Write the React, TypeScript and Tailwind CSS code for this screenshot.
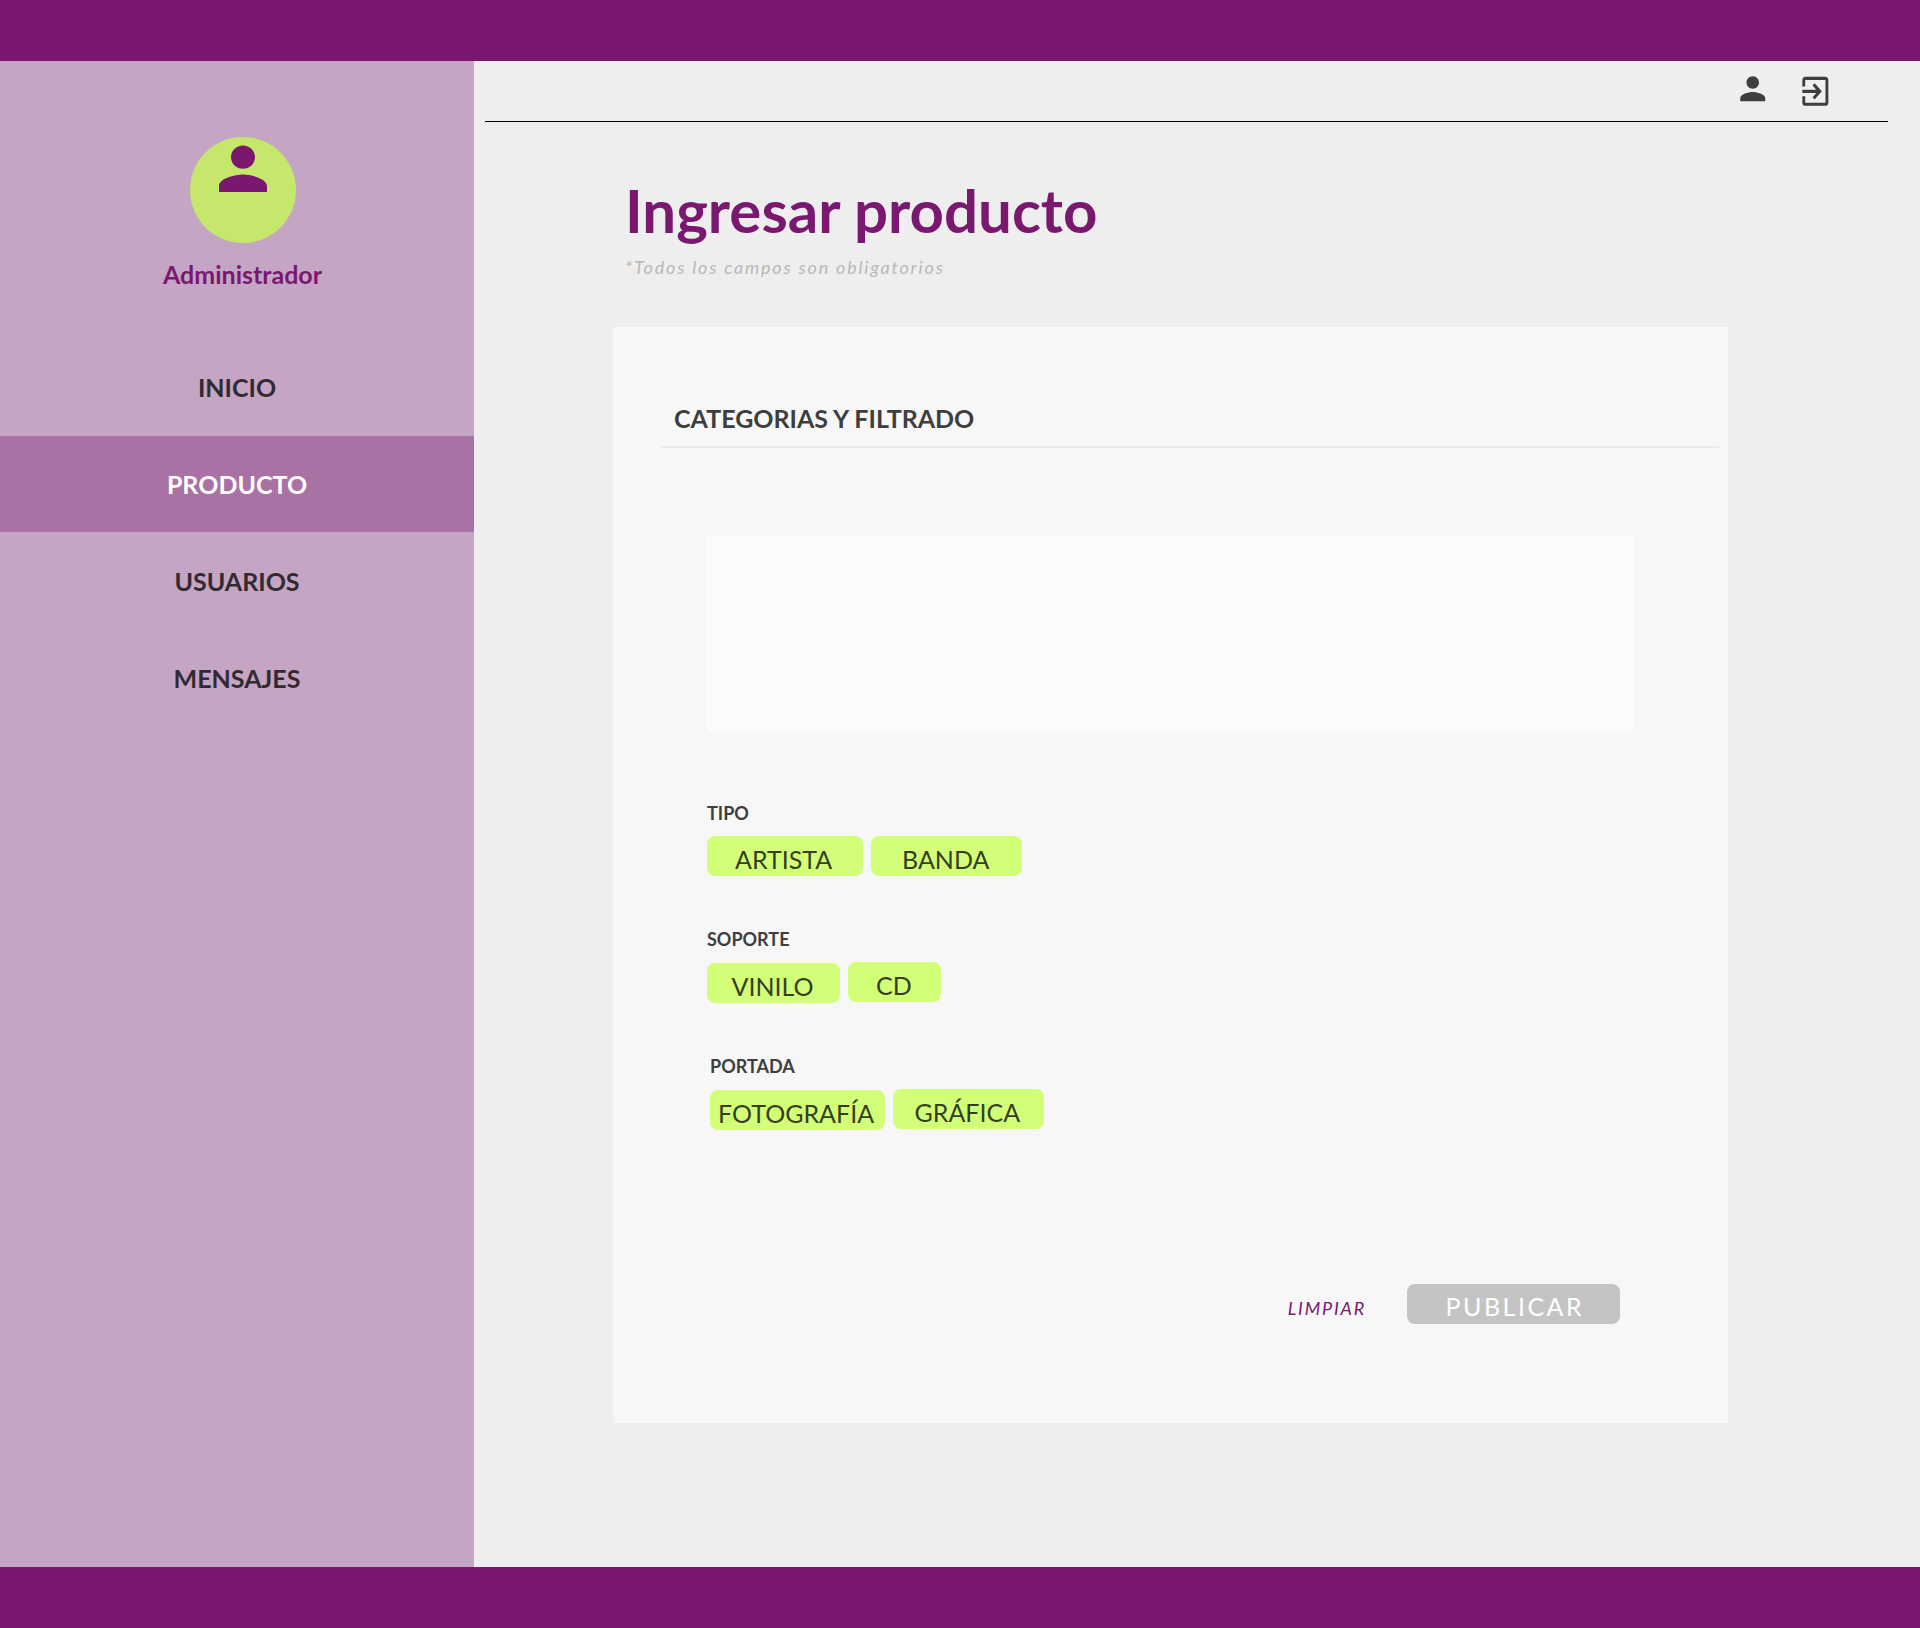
type TagItem = { label: string; box: string };
type Group = { title: string; className: string; tags: TagItem[] };

const navItems = [
  { label: 'INICIO', active: false },
  { label: 'PRODUCTO', active: true },
  { label: 'USUARIOS', active: false },
  { label: 'MENSAJES', active: false },
];

const groups: Group[] = [
  {
    title: 'TIPO',
    className: 'mt-[70px]',
    tags: [
      { label: 'ARTISTA', box: 'w-[156px] pl-[28px]' },
      { label: 'BANDA', box: 'w-[151px] pl-[31px]' },
    ],
  },
  {
    title: 'SOPORTE',
    className: 'mt-[52px]',
    tags: [
      { label: 'VINILO', box: 'w-[133px] pl-[24.5px] mt-px' },
      { label: 'CD', box: 'w-[93px] pl-[28px]' },
    ],
  },
  {
    title: 'PORTADA',
    className: 'mt-[52px] ml-[3px]',
    tags: [
      { label: 'FOTOGRAFÍA', box: 'w-[175px] pl-[8px] mt-px' },
      { label: 'GRÁFICA', box: 'w-[151px] pl-[21.5px]' },
    ],
  },
];

function PersonIcon({ className }: { className: string }) {
  return (
    <svg viewBox="0 0 24 24" preserveAspectRatio="none" fill="currentColor" className={className}>
      <path d="M12 12c2.21 0 4-1.79 4-4s-1.79-4-4-4-4 1.79-4 4 1.79 4 4 4zm0 2c-2.67 0-8 1.34-8 4v2h16v-2c0-2.66-5.33-4-8-4z" />
    </svg>
  );
}

function ExitIcon({ className }: { className: string }) {
  return (
    <svg viewBox="0 0 24 24" preserveAspectRatio="none" fill="currentColor" className={className}>
      <path d="M10.09 15.59L11.5 17l5-5-5-5-1.41 1.41L12.67 11H3v2h9.67l-2.58 2.59zM19 3H5c-1.11 0-2 .9-2 2v4h2V5h14v14H5v-4H3v4c0 1.1.89 2 2 2h14c1.1 0 2-.9 2-2V5c0-1.1-.9-2-2-2z" />
    </svg>
  );
}

function Sidebar() {
  return (
    <aside className="w-[474px] shrink-0 bg-[#c5a5c4] pt-[76px]">
      <div className="ml-[12px] flex flex-col items-center">
        <div className="flex size-[106px] justify-center rounded-full bg-[#c5e86c]">
          <PersonIcon className="-mt-[3px] h-[69.5px] w-[72px] text-[#7a1870]" />
        </div>
        <div className="mt-[16px] mr-px text-[25px] leading-[30px] font-bold text-[#7a1870]">Administrador</div>
      </div>
      <nav className="mt-[50px] flex flex-col gap-px">
        {navItems.map((item) => (
          <a
            key={item.label}
            className={
              item.active
                ? 'flex h-[96px] items-center justify-center bg-[#aa71a5] text-[25px] leading-[30px] font-bold text-white'
                : 'flex h-[96px] items-center justify-center text-[25px] leading-[30px] font-bold text-[#312b31]'
            }
          >
            {item.label}
          </a>
        ))}
      </nav>
    </aside>
  );
}

function TagGroup({ group }: { group: Group }) {
  return (
    <section className={group.className}>
      <h3 className="text-[18px] leading-[22px] font-bold text-[#3e3e3e]">{group.title}</h3>
      <div className="mt-[12px] flex items-start gap-[8px]">
        {group.tags.map((tag) => (
          <button
            key={tag.label}
            className={`${tag.box} h-[40px] rounded-lg bg-[#d2ff77] pt-[6px] text-left text-[25px] leading-[30px] whitespace-nowrap text-[#353f1f]`}
          >
            {tag.label}
          </button>
        ))}
      </div>
    </section>
  );
}

export default function App() {
  return (
    <div className="flex h-[1628px] w-[1920px] flex-col bg-[#eeeeee] font-['Lato',sans-serif]">
      <div className="h-[61px] shrink-0 bg-[#7a1870]" />
      <div className="flex min-h-0 flex-1">
        <Sidebar />
        <main className="flex-1">
          <header className="mr-[32px] ml-[11px] flex h-[61px] items-start justify-end border-b border-black pr-[55px] text-[#3e3e3e]">
            <PersonIcon className="mt-[8.5px] h-[37.5px] w-[37.5px]" />
            <ExitIcon className="mt-[11px] ml-[26.5px] h-[38.7px] w-[34.7px]" />
          </header>
          <div className="ml-[139px] w-[1115px]">
            <div className="pl-[12px]">
              <h1 className="mt-[52px] text-[60px] leading-[72px] font-bold text-[#7a1870]">Ingresar producto</h1>
              <p className="mt-[10px] text-[18px] leading-[22px] tracking-[0.1em] text-[#b8b8b8] italic">
                *Todos los campos son obligatorios
              </p>
            </div>
            <div className="mt-[49px] h-[1096px] bg-[#f7f7f7] pt-[76px]">
              <div className="mr-[9px] ml-[48px] h-[45px] border-b-2 border-[#ebebeb] pl-[13px]">
                <h2 className="text-[25px] leading-[30px] font-bold text-[#3e3e3e]">CATEGORIAS Y FILTRADO</h2>
              </div>
              <div className="mt-[87px] mr-[94px] ml-[94px]">
                <div className="h-[197px] bg-[#fbfbfb]" />
                {groups.map((group) => (
                  <TagGroup key={group.title} group={group} />
                ))}
              </div>
              <div className="mt-[154px] flex items-start justify-end pr-[108px]">
                <button className="mt-[13px] mr-[41px] text-[18px] leading-[22px] tracking-[0.1em] text-[#7a1870] italic">
                  LIMPIAR
                </button>
                <button className="h-[40px] w-[213px] rounded-lg bg-[#c4c4c4] pt-[4px] pl-[38.5px] text-left text-[25px] leading-[30px] tracking-[0.1em] text-white">
                  PUBLICAR
                </button>
              </div>
            </div>
          </div>
        </main>
      </div>
      <div className="h-[61px] shrink-0 bg-[#7a1870]" />
    </div>
  );
}
